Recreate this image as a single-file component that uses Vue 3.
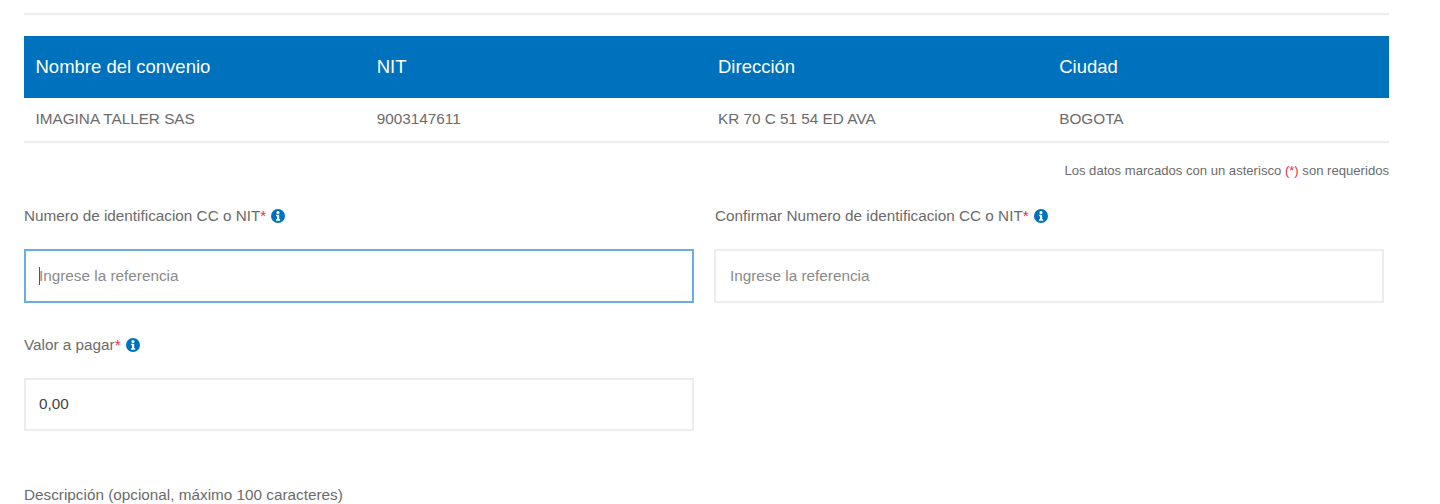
<script setup>
const columns = ['Nombre del convenio', 'NIT', 'Dirección', 'Ciudad']
const values = ['IMAGINA TALLER SAS', '9003147611', 'KR 70 C 51 54 ED AVA', 'BOGOTA']
</script>

<template>
  <main class="page">
    <div class="content">
      <hr class="rule" />
      <section class="table">
        <div class="row head">
          <div v-for="c in columns" :key="c" class="cell">{{ c }}</div>
        </div>
        <div class="row body">
          <div v-for="v in values" :key="v" class="cell">{{ v }}</div>
        </div>
      </section>
      <p class="note">Los datos marcados con un asterisco <span class="req">(*)</span> son requeridos</p>
      <div class="form">
        <div class="field">
          <div class="label">Numero de identificacion CC o NIT<span class="req">*</span>
            <svg class="info" viewBox="0 0 14 14" aria-hidden="true"><circle cx="7" cy="7" r="7" fill="#0071bc"/><circle cx="7" cy="3.5" r="1.5" fill="#fff"/><path d="M5 5.8h3.2v4.4h1v1.5H5v-1.5h1V7.3H5z" fill="#fff"/></svg>
          </div>
          <div class="input focus"><span class="caret"></span><span class="ph">Ingrese la referencia</span></div>
        </div>
        <div class="field">
          <div class="label shifted">Confirmar Numero de identificacion CC o NIT<span class="req">*</span>
            <svg class="info" viewBox="0 0 14 14" aria-hidden="true"><circle cx="7" cy="7" r="7" fill="#0071bc"/><circle cx="7" cy="3.5" r="1.5" fill="#fff"/><path d="M5 5.8h3.2v4.4h1v1.5H5v-1.5h1V7.3H5z" fill="#fff"/></svg>
          </div>
          <div class="input wide-pad"><span class="ph">Ingrese la referencia</span></div>
        </div>
        <div class="field">
          <div class="label">Valor a pagar<span class="req">*</span>
            <svg class="info" viewBox="0 0 14 14" aria-hidden="true"><circle cx="7" cy="7" r="7" fill="#0071bc"/><circle cx="7" cy="3.5" r="1.5" fill="#fff"/><path d="M5 5.8h3.2v4.4h1v1.5H5v-1.5h1V7.3H5z" fill="#fff"/></svg>
          </div>
          <div class="input short"><span class="val">0,00</span></div>
        </div>
      </div>
      <div class="label desc">Descripción (opcional, máximo 100 caracteres)</div>
    </div>
  </main>
</template>

<style>
html, body { background: #fff; overflow: hidden; }
</style>

<style scoped>
.page {
  height: 504px;
  overflow: hidden;
  padding-left: 24px;
  font-family: "Liberation Sans", Arial, sans-serif;
  color: #6b6b6b;
  box-sizing: border-box;
}
.content { width: 1365px; padding-top: 13px; }
.rule { height: 2px; margin: 0; border: 0; background: #ececec; }
.table { margin-top: 21px; }
.row { display: grid; grid-template-columns: repeat(4, 1fr); align-items: center; }
.head { height: 62px; background: #0071bc; color: #fff; font-size: 18.5px; }
.body { height: 43px; border-bottom: 2px solid #ececec; font-size: 15.3px; }
.body .cell { padding-bottom: 2px; }
.cell { padding-left: 11.5px; }
.note { margin: 20px 0 0; text-align: right; font-size: 13.1px; line-height: 16px; }
.req { color: #e8294f; }
.form {
  display: grid;
  grid-template-columns: 670px 670px;
  column-gap: 20px;
  row-gap: 32px;
  margin-top: 27px;
}
.label { font-size: 15.3px; line-height: 20px; display: flex; align-items: center; }
.shifted { padding-left: 1px; }
.info { width: 14px; height: 14px; margin-left: 5px; flex: none; }
.input {
  margin-top: 23px;
  height: 54px;
  box-sizing: border-box;
  border: 2px solid #ececec;
  padding-left: 13px;
  display: flex;
  align-items: center;
  font-size: 15.3px;
}
.wide-pad { padding-left: 14px; }
.short { height: 53px; padding-bottom: 1px; }
.focus { border-color: #6aaee0; }
.caret { width: 1px; height: 18px; background: #555; margin-right: -1px; }
.ph { color: #8a8a8a; }
.val { color: #444; }
.desc { margin-top: 54px; }
</style>
